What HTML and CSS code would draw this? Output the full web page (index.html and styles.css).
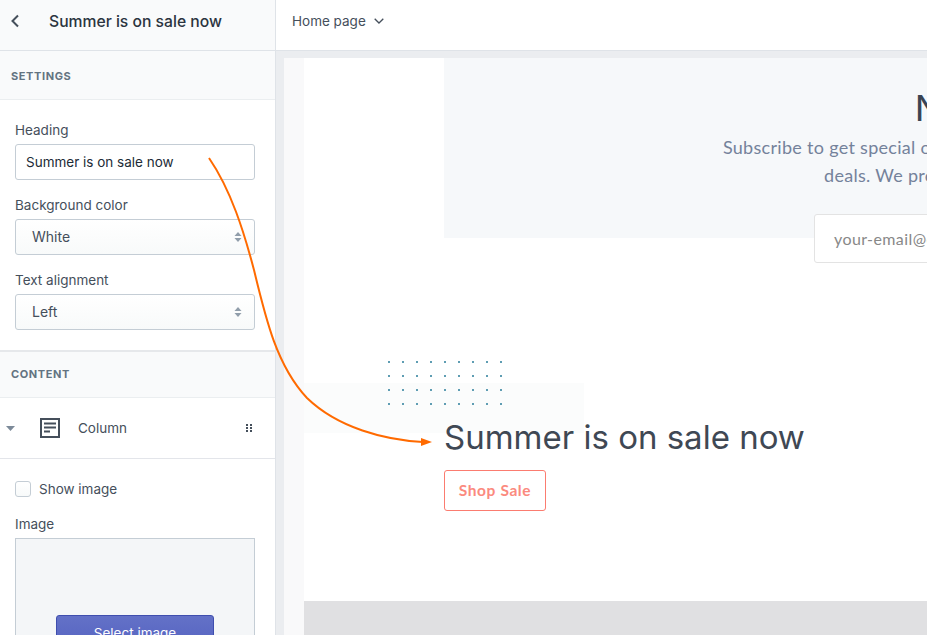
FILE: index.html
```html
<!DOCTYPE html>
<html>
<head>
    <title>Theme Editor</title>
    <link rel="stylesheet" href="styles.css">
</head>
<body>

    <div class="sidebar">
        <div class="sidebar-header">
            <svg class="back-icon" width="10" height="14" viewBox="0 0 10 14"><path d="M8 1.500 2.500 7 8 12.500" fill="none" stroke="#454f5b" stroke-width="2"/></svg>
            <h1>Summer is on sale now</h1>
        </div>

        <div class="section-title settings-title">Settings</div>
        <div class="fields">
            <label class="field-label">Heading</label>
            <input class="text-input" type="text" value="Summer is on sale now">

            <label class="field-label">Background color</label>
            <div class="select">
                <span>White</span>
                <svg width="8" height="12" viewBox="0 0 8 12"><path d="M4 1 7.500 5h-7zM4 11 .5 7h7z" fill="#919eab"/></svg>
            </div>

            <label class="field-label">Text alignment</label>
            <div class="select">
                <span>Left</span>
                <svg width="8" height="12" viewBox="0 0 8 12"><path d="M4 1 7.500 5h-7zM4 11 .5 7h7z" fill="#919eab"/></svg>
            </div>
        </div>

        <div class="section-title content-title">Content</div>
        <div class="block-row">
            <svg class="caret" width="9" height="5" viewBox="0 0 9 5"><path d="M0 0h9L4.500 5z" fill="#7c8a99"/></svg>
            <svg class="column-icon" width="20" height="20" viewBox="0 0 20 20">
                <path d="M1 1h18v18H1z" fill="none" stroke="#454f5b" stroke-width="2"/>
                <path d="M4 5.500h12M4 9.500h12M4 13.500h6" fill="none" stroke="#454f5b" stroke-width="2"/>
            </svg>
            <span class="block-name">Column</span>
            <svg class="drag-icon" width="6" height="8" viewBox="0 0 6 8">
                <path d="M0 0h2v2H0zM4 0h2v2H4zM0 3h2v2H0zM4 3h2v2H4zM0 6h2v2H0zM4 6h2v2H4z" fill="#454f5b"/>
            </svg>
        </div>
        <div class="block-fields">
            <div class="check-row">
                <span class="checkbox"></span>
                <span>Show image</span>
            </div>
            <label class="field-label">Image</label>
            <div class="image-box">
                <button class="select-btn">Select image</button>
            </div>
        </div>
    </div>

    <div class="main">
        <div class="topbar">
            <span>Home page</span>
            <svg width="10" height="6" viewBox="0 0 10 6"><path d="M.7.7 5 5 9.300.7" fill="none" stroke="#454f5b" stroke-width="1.300"/></svg>
        </div>
        <div class="canvas">
            <div class="page">
                <div class="page-inner">
                    <div class="newsletter">
                        <div class="newsletter-panel">
                            <h2>Newsletter</h2>
                            <p>Subscribe to get special offers, free giveaways, and once-in-a-lifetime<br>deals. We promise not to spam your inboxes.</p>
                            <div class="email-input">your-email@example.com</div>
                        </div>
                    </div>

                    <div class="hero">
                        <div class="hero-band"></div>
                        <div class="dots" id="dots"></div>
                        <h2 class="hero-title">Summer is on sale now</h2>
                        <a class="shop-btn">Shop Sale</a>
                    </div>

                    <div class="footer-band"></div>
                </div>
            </div>
        </div>
    </div>

    <svg class="arrow" width="927" height="635" viewBox="0 0 927 635">
        <path d="M209 158C231 190 244 232 254 270C266 320 277 366 307 398C338 428 385 440 423 442" fill="none" stroke="#ff6a00" stroke-width="2"/>
        <path d="M421 438 432 442 421 446z" fill="#ff6a00"/>
    </svg>

    <script>
        const dots = document.getElementById('dots');
        for (let i = 0; i < 36; i++) {
            dots.appendChild(document.createElement('span'));
        }
    </script>
</body>
</html>
```

FILE: styles.css
```css
html, body {
    height: 100%;
    overflow: hidden;
}

body {
    font-family: 'Inter', 'Roboto', sans-serif;
    margin: 0;
    padding: 0;
    display: flex;
    color: #212b36;
    background-color: white;
}

.sidebar {
    width: 276px;
    flex-shrink: 0;
    box-sizing: border-box;
    border-right: 1px solid #dfe3e8;
    overflow: hidden;
}

.sidebar-header {
    height: 51px;
    box-sizing: border-box;
    background-color: #f9fafb;
    border-bottom: 1px solid #dfe3e8;
    display: flex;
    align-items: center;
    padding: 0 0 8px 10px;
}

.back-icon {
    margin-right: 29px;
}

.sidebar-header h1 {
    margin: 0;
    font-size: 15.700px;
    font-weight: 500;
    color: #2b3440;
}

.section-title {
    background-color: #f9fafb;
    box-sizing: border-box;
    padding-left: 11px;
    font-size: 11px;
    font-weight: 700;
    letter-spacing: 0.6px;
    text-transform: uppercase;
    color: #637381;
    display: flex;
    align-items: center;
    border-bottom: 1px solid #ebeef0;
}

.settings-title {
    height: 49px;
    padding-top: 2px;
}

.content-title {
    height: 48px;
    border-top: 2px solid #e6e8eb;
    padding-bottom: 2px;
}

.fields {
    padding: 21px 20px 20px 15px;
}

.field-label {
    display: block;
    font-size: 13.500px;
    line-height: 18px;
    color: #454f5b;
    margin-bottom: 5px;
}

.text-input,
.select {
    display: flex;
    align-items: center;
    width: 240px;
    height: 36px;
    box-sizing: border-box;
    border: 1px solid #c4cdd5;
    border-radius: 3px;
    font-family: inherit;
    font-size: 14px;
    color: #212b36;
    margin-bottom: 16px;
}

.text-input {
    padding: 0 10px;
    background-color: white;
    font-size: 13.500px;
}

.select {
    justify-content: space-between;
    padding: 0 16px;
    padding-right: 12px;
    background: linear-gradient(#ffffff, #f8fafa);
    color: #454f5b;
}

.select span {
    margin-bottom: 2px;
}

.fields .select:last-child {
    margin-bottom: 0;
}

.block-row {
    height: 61px;
    box-sizing: border-box;
    border-bottom: 1px solid #e3e5ea;
    display: flex;
    align-items: center;
    padding-left: 6px;
}

.caret {
    margin-right: 25px;
}

.block-name {
    font-size: 13.500px;
    color: #454f5b;
    margin-left: 18px;
}

.drag-icon {
    margin-left: auto;
    margin-right: 23px;
}

.block-fields {
    padding: 22px 20px 0 15px;
}

.check-row {
    display: flex;
    align-items: center;
    gap: 8px;
    font-size: 13.500px;
    color: #454f5b;
    margin-bottom: 18px;
}

.checkbox {
    width: 16px;
    height: 16px;
    box-sizing: border-box;
    border: 1px solid #c4cdd5;
    border-radius: 3px;
    background: linear-gradient(#ffffff, #f8fafa);
}

.image-box {
    width: 240px;
    height: 180px;
    box-sizing: border-box;
    border: 1px solid #c4cdd5;
    background-color: #f4f6f8;
    display: flex;
    justify-content: center;
    padding-top: 76px;
}

.select-btn {
    width: 158px;
    height: 36px;
    border: 1px solid #3f4eae;
    border-radius: 3px;
    background: linear-gradient(#6371c7, #5563c1);
    color: white;
    font-family: inherit;
    font-size: 13.500px;
}

.main {
    flex: 1;
    min-width: 0;
    display: flex;
    flex-direction: column;
}

.topbar {
    height: 51px;
    flex-shrink: 0;
    box-sizing: border-box;
    border-bottom: 1px solid #dfe3e8;
    display: flex;
    align-items: center;
    gap: 8px;
    padding: 0 0 8px 16px;
    font-size: 13.500px;
    color: #454f5b;
    background-color: white;
}

.canvas {
    flex: 1;
    background-color: #ebedf0;
    padding: 7px 0 0 8px;
    overflow: hidden;
}

.page {
    background-color: #f9f9fa;
    padding-left: 20px;
    height: 100%;
    width: 1300px;
}

.page-inner {
    background-color: white;
    height: 100%;
}

.newsletter {
    padding-left: 140px;
}

.newsletter-panel {
    width: 1124px;
    height: 180px;
    box-sizing: border-box;
    background-color: #f6f8fa;
    padding-top: 28px;
    text-align: center;
}

.newsletter-panel h2 {
    margin: 0 0 3px 0;
    font-family: 'Inter', sans-serif;
    font-size: 36px;
    line-height: 44px;
    font-weight: 400;
    color: #3a4452;
}

.newsletter-panel p {
    margin: 0 0 25px 0;
    font-family: 'Lato', sans-serif;
    font-size: 18px;
    letter-spacing: 0.3px;
    line-height: 28px;
    color: #74829b;
}

.email-input {
    width: 384px;
    height: 49px;
    box-sizing: border-box;
    margin: 0 auto;
    background-color: white;
    border: 1px solid #e3e3e3;
    border-radius: 3px;
    padding-left: 19px;
    font-family: 'Lato', sans-serif;
    font-size: 16px;
    letter-spacing: 0.4px;
    line-height: 47px;
    color: #888888;
    text-align: left;
}

.hero {
    position: relative;
    height: 363px;
    box-sizing: border-box;
    padding: 178px 0 0 140px;
}

.hero-band {
    position: absolute;
    left: 0;
    top: 145px;
    width: 280px;
    height: 50px;
    background-color: #fbfcfc;
}

.dots {
    position: absolute;
    left: 84px;
    top: 123px;
    display: grid;
    grid-template-columns: repeat(9, 2px);
    grid-auto-rows: 2px;
    gap: 12px;
}

.dots span {
    background-color: #5f9db3;
}

.hero-title {
    position: relative;
    margin: 0 0 12px 0;
    font-family: 'Inter', sans-serif;
    font-size: 33px;
    line-height: 42px;
    font-weight: 400;
    color: #3f4854;
}

.shop-btn {
    display: block;
    width: 102px;
    height: 41px;
    box-sizing: border-box;
    border: 1px solid #fb7c70;
    border-radius: 3px;
    font-family: 'Lato', sans-serif;
    font-size: 15.500px;
    font-weight: 700;
    letter-spacing: 0.6px;
    line-height: 39px;
    text-align: center;
    color: #fb8a7e;
}

.footer-band {
    height: 100px;
    background-color: #e0e0e2;
}

.arrow {
    position: absolute;
    left: 0;
    top: 0;
    pointer-events: none;
}
```
